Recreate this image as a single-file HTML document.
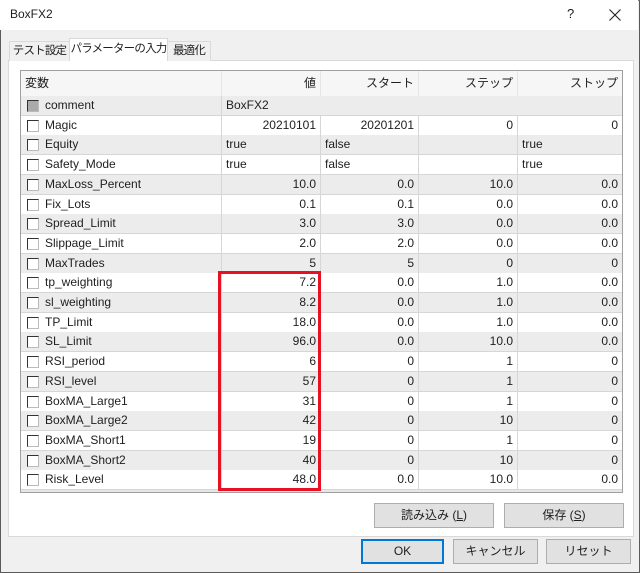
<!DOCTYPE html>
<html><head><meta charset="utf-8"><style>
*{margin:0;padding:0;box-sizing:border-box}
body{width:640px;height:573px;background:#f0f0f0;font-family:"Liberation Sans","Noto Sans CJK JP",sans-serif;font-size:12px;color:#1e1e1e;position:relative;overflow:hidden}
.win{position:absolute;left:0;top:0;width:640px;height:573px;border:1px solid #5a5a5a;border-top:1px solid #7a7a7a}
.title{position:absolute;left:0;top:0;width:638px;height:30px;background:#fff}
.abs{position:absolute}
.tab{position:absolute;border:1px solid #d9d9d9;border-bottom:none;background:#f0f0f0;text-align:center;line-height:18px;white-space:nowrap;font-size:11.5px;letter-spacing:-0.8px;overflow:hidden}
.panel{position:absolute;left:8px;top:60px;width:626px;height:477px;background:#fff;border:1px solid #d9d9d9}
.tbl{position:absolute;left:20px;top:70px;width:603px;height:423px;border:1px solid #a0a0a0;background:#fff;overflow:hidden}
.row{position:absolute;left:0;width:601px;height:20px;border-bottom:1px solid #d6d6d6}
.c{position:absolute;top:0;height:100%;line-height:19px;border-right:1px solid #d6d6d6;padding:0 4px;white-space:nowrap}
.r{text-align:right}
.cb{position:absolute;left:6px;top:4px;width:12px;height:12px;border:1px solid #333;border-right-color:#bbb;border-bottom-color:#bbb;background:#fff}
.btn{position:absolute;background:#e1e1e1;border:1px solid #adadad;text-align:center;line-height:22px;white-space:nowrap}
</style></head><body>
<div class="win"></div>
<div class="title"></div>
<div class="abs" style="left:10px;top:7px;font-size:12px">BoxFX2</div>
<div class="abs" style="left:567px;top:6px;font-size:13px">?</div>
<svg class="abs" style="left:609px;top:9px" width="12" height="12"><path d="M0.5 0.5L11.5 11.5M11.5 0.5L0.5 11.5" stroke="#222" stroke-width="1.1"/></svg>
<div class="panel"></div>
<div class="tab" style="left:9px;top:41px;width:61px;height:20px">テスト設定</div>
<div class="tab" style="left:167px;top:41px;width:44px;height:20px">最適化</div>
<div class="tab" style="left:69px;top:38px;width:99px;height:23px;background:#fff;line-height:20px">パラメーターの入力</div>
<div class="tbl">
<div class="row" style="top:0;height:25px;background:#f6f6f6;border-bottom:none">
<div class="c" style="left:0;width:201px;line-height:25px;border-right-color:#e5e5e5">変数</div>
<div class="c r" style="left:201px;width:99px;line-height:25px;border-right-color:#e5e5e5">値</div>
<div class="c r" style="left:300px;width:98px;line-height:25px;border-right-color:#e5e5e5">スタート</div>
<div class="c r" style="left:398px;width:99px;line-height:25px;border-right-color:#e5e5e5">ステップ</div>
<div class="c r" style="left:497px;width:104px;line-height:25px;border-right:none">ストップ</div>
</div>
<div id="rows"></div>
<div class="abs" style="left:0;top:419px;width:601px;height:4px;background:#e6e6e6"></div>
</div>
<div class="abs" style="left:218px;top:271px;width:103px;height:220px;border:3px solid #e81123"></div>
<div class="btn" style="left:374px;top:503px;width:120px;height:25px">読み込み (<u>L</u>)</div>
<div class="btn" style="left:504px;top:503px;width:120px;height:25px">保存 (<u>S</u>)</div>
<div class="btn" style="left:361px;top:539px;width:83px;height:25px;border:2px solid #0078d7;line-height:21px">OK</div>
<div class="btn" style="left:453px;top:539px;width:85px;height:25px">キャンセル</div>
<div class="btn" style="left:546px;top:539px;width:85px;height:25px">リセット</div>
<script>
var d=[["comment","BoxFX2","","","",1],["Magic","20210101","20201201","0","0"],["Equity","true","false","","true",2],["Safety_Mode","true","false","","true",2],
["MaxLoss_Percent","10.0","0.0","10.0","0.0"],["Fix_Lots","0.1","0.1","0.0","0.0"],["Spread_Limit","3.0","3.0","0.0","0.0"],["Slippage_Limit","2.0","2.0","0.0","0.0"],
["MaxTrades","5","5","0","0"],["tp_weighting","7.2","0.0","1.0","0.0"],["sl_weighting","8.2","0.0","1.0","0.0"],["TP_Limit","18.0","0.0","1.0","0.0"],
["SL_Limit","96.0","0.0","10.0","0.0"],["RSI_period","6","0","1","0"],["RSI_level","57","0","1","0"],["BoxMA_Large1","31","0","1","0"],
["BoxMA_Large2","42","0","10","0"],["BoxMA_Short1","19","0","1","0"],["BoxMA_Short2","40","0","10","0"],["Risk_Level","48.0","0.0","10.0","0.0"]];
var h="";
d.forEach(function(r,i){var top=25+i*19.7;var bg=i%2==0?"#ececec":"#fff";var t=r[5];
var al=t?"":" r";
h+='<div class="row" style="top:'+top+'px;background:'+bg+'">';
h+='<div class="c" style="left:0;width:201px;padding-left:24px"><span class="cb"'+(t==1?' style="background:#aaa"':'')+'></span>'+r[0]+'</div>';
if(t==1){h+='<div class="c" style="left:201px;width:400px;border-right:none">'+r[1]+'</div>';}
else{
h+='<div class="c'+al+'" style="left:201px;width:99px">'+r[1]+'</div>';
h+='<div class="c'+al+'" style="left:300px;width:98px">'+r[2]+'</div>';
h+='<div class="c'+al+'" style="left:398px;width:99px">'+r[3]+'</div>';
h+='<div class="c'+al+'" style="left:497px;width:104px;border-right:none">'+r[4]+'</div>';}
h+='</div>';});
document.getElementById("rows").innerHTML=h;
</script>
</body></html>
